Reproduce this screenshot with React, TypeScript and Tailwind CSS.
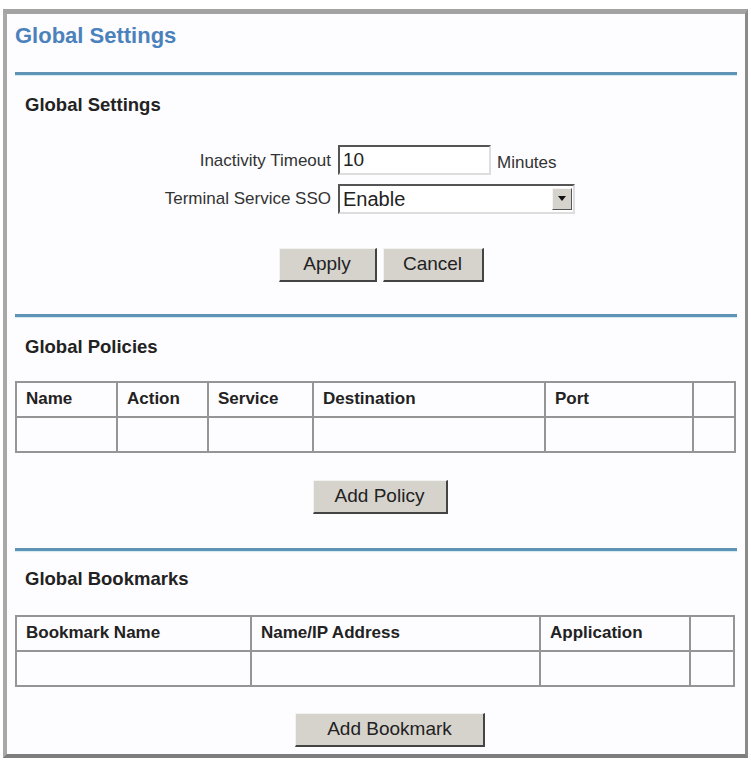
import React from 'react'

const font = { fontFamily: '"Liberation Sans", Arial, sans-serif' }

function Rule() {
  return <div className="mx-[8px] h-[3px] bg-[#5f93b6] shadow-[0_1px_1px_#cfeaf3]" />
}

function Btn({ label, w }: { label: string; w: string }) {
  return (
    <button
      className={`${w} h-[34px] bg-[#d6d3cd] text-[19px] text-[#222] border-t border-l border-t-[#f2f2f2] border-l-[#f2f2f2] border-r-2 border-b-2 border-r-[#444] border-b-[#444]`}
    >
      {label}
    </button>
  )
}

function Grid({ cols }: { cols: { name: string; w: number }[] }) {
  return (
    <table className="ml-[8px] border-collapse border-2 border-[#8f8f8f]">
      <tbody>
        <tr>
          {cols.map(c => (
            <th
              key={c.name + c.w}
              style={{ width: c.w }}
              className="h-[35px] border-2 border-[#959595] pl-[9px] text-left text-[17px] font-bold text-[#222]"
            >
              {c.name}
            </th>
          ))}
        </tr>
        <tr>
          {cols.map(c => (
            <td key={c.name + c.w} className="h-[35px] border-2 border-[#959595]" />
          ))}
        </tr>
      </tbody>
    </table>
  )
}

export default function App() {
  return (
    <div className="bg-white w-[751px] h-[762px] pt-[9px] pl-[3px]" style={font}>
      <div className="w-[745px] h-[749px] border-t-[5px] border-l-[4px] border-r-[3px] border-b-[4px] border-t-[#a3a3a3] border-l-[#a8a8a8] border-r-[#8a8a8a] border-b-[#7d7d7d] bg-[#fdfcfe]">
        {/* Page title */}
        <h1 className="pl-[8px] pt-[5px] h-[58px] text-[22px] font-bold text-[#4b82bb]">Global Settings</h1>
        <Rule />

        {/* Global Settings */}
        <h2 className="pl-[18px] pt-[16px] h-[70px] text-[18.5px] font-bold text-[#222]">Global Settings</h2>
        <div className="flex flex-col gap-[8px] text-[17px] text-[#333]">
          <div className="flex items-center">
            <span className="w-[331px] text-right pr-[7px]">Inactivity Timeout</span>
            <div className="w-[153px] h-[30px] border-2 border-t-[#555] border-l-[#555] border-r-[#ddd] border-b-[#ddd] bg-white pl-[3px] text-[19px] leading-[26px] text-[#222]">10</div>
            <span className="ml-[6px] mt-[5px]">Minutes</span>
          </div>
          <div className="flex items-center">
            <span className="w-[331px] text-right pr-[7px]">Terminal Service SSO</span>
            <div className="w-[237px] h-[30px] flex border-2 border-t-[#555] border-l-[#555] border-r-[#ddd] border-b-[#ddd] bg-white">
              <span className="flex-1 pl-[3px] text-[20px] leading-[26px] text-[#222]">Enable</span>
              <span className="w-[20px] my-[2px] mr-[1px] flex items-center justify-center bg-[#d6d3cd] border border-t-[#f4f4f4] border-l-[#f4f4f4] border-r-[#555] border-b-[#555]">
                <svg width="8" height="5" viewBox="0 0 8 5"><polygon points="0,0 8,0 4,5" fill="#111" /></svg>
              </span>
            </div>
          </div>
        </div>
        <div className="flex justify-center gap-[6px] mt-[34px] pl-[10px]">
          <Btn label="Apply" w="w-[98px]" />
          <Btn label="Cancel" w="w-[101px]" />
        </div>
        <div className="h-[32px]" />
        <Rule />

        {/* Global Policies */}
        <h2 className="pl-[18px] pt-[16px] h-[64px] text-[18.5px] font-bold text-[#222]">Global Policies</h2>
        <Grid
          cols={[
            { name: 'Name', w: 101 },
            { name: 'Action', w: 91 },
            { name: 'Service', w: 105 },
            { name: 'Destination', w: 232 },
            { name: 'Port', w: 148 },
            { name: '', w: 42 },
          ]}
        />
        <div className="flex justify-center mt-[27px] pl-[8px]">
          <Btn label="Add Policy" w="w-[135px]" />
        </div>
        <div className="h-[34px]" />
        <Rule />

        {/* Global Bookmarks */}
        <h2 className="pl-[18px] pt-[14px] h-[64px] text-[18.5px] font-bold text-[#222]">Global Bookmarks</h2>
        <Grid
          cols={[
            { name: 'Bookmark Name', w: 235 },
            { name: 'Name/IP Address', w: 289 },
            { name: 'Application', w: 150 },
            { name: '', w: 44 },
          ]}
        />
        <div className="flex justify-center mt-[26px] pl-[28px]">
          <Btn label="Add Bookmark" w="w-[190px]" />
        </div>
      </div>
    </div>
  )
}
